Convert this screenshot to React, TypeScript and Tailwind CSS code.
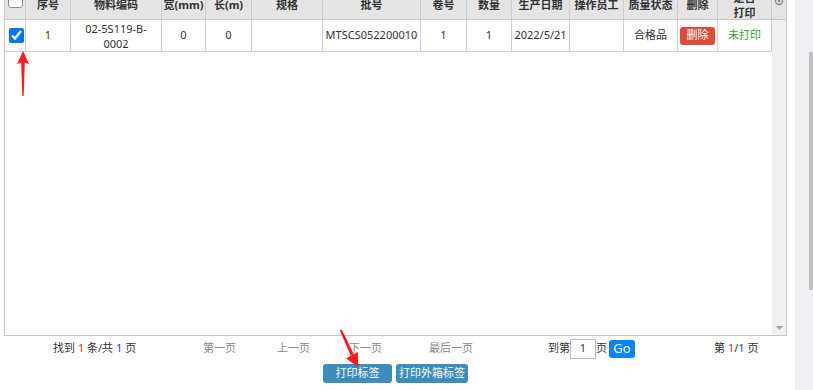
import React from "react";

const headW = [
  "w-[21px]",
  "w-[45px]",
  "w-[91px]",
  "w-[44px]",
  "w-[46px]",
  "w-[71px]",
  "w-[98px]",
  "w-[46px]",
  "w-[45px]",
  "w-[58px]",
  "w-[54px]",
  "w-[54px]",
  "w-[40px]",
  "w-[54px]",
];

const heads = [
  "",
  "序号",
  "物料编码",
  "宽(mm)",
  "长(m)",
  "规格",
  "批号",
  "卷号",
  "数量",
  "生产日期",
  "操作员工",
  "质量状态",
  "删除",
  "是否打印",
];

export default function App() {
  const font = { fontFamily: '"Noto Sans", "Noto Sans CJK SC", sans-serif' };
  return (
    <div
      className="w-[813px] h-[390px] overflow-hidden flex bg-white text-[11px] text-[#333]"
      style={font}
    >
      <div className="w-[795px] h-full relative flex flex-col">
        {/* grid */}
        <div className="ml-[4px] mt-[-11px] w-[783px] h-[347px] border border-[#c9c9c9] flex flex-col">
          {/* header */}
          <div className="flex h-[30px] border-b border-[#c9c9c9] bg-[#e4e4e4] shrink-0">
            {heads.map((h, i) => (
              <div
                key={i}
                className={`${headW[i]} h-full border-r border-[#cdcdcd] flex justify-center font-bold text-[#333] leading-[15px] text-center ${
                  i === 0 ? "items-start" : "items-center"
                }`}
              >
                {i === 0 ? (
                  <span className="mt-[3px] w-[15px] h-[15px] rounded-[3px] border border-[#8f8f8f] bg-white block" />
                ) : i === 13 ? (
                  <span>
                    是否
                    <br />
                    打印
                  </span>
                ) : (
                  h
                )}
              </div>
            ))}
            <div className="w-[14px] h-full flex items-center justify-center">
              <svg width="10" height="10" viewBox="0 0 10 10" className="mt-[-8px]">
                <circle cx="5" cy="5" r="3.5" fill="none" stroke="#8a8a8a" strokeWidth="1.4" />
                <circle cx="5" cy="5" r="1.3" fill="#8a8a8a" />
              </svg>
            </div>
          </div>
          {/* body */}
          <div className="flex flex-1">
            <div className="w-[767px] bg-white">
              <div className="flex h-[32px] border-b border-[#d0d0d0] text-[#333]">
                <div className="w-[21px] border-r border-[#d0d0d0] flex items-center justify-center">
                  <input
                    type="checkbox"
                    defaultChecked
                    readOnly
                    className="w-[15px] h-[15px] m-0 accent-[#0075ff] ml-[3px]"
                  />
                </div>
                <div className="w-[45px] border-r border-[#d0d0d0] flex items-center justify-center">1</div>
                <div className="w-[91px] border-r border-[#d0d0d0] flex items-center justify-center text-center leading-[15px]">
                  <span>
                    02-5S119-B-
                    <br />
                    0002
                  </span>
                </div>
                <div className="w-[44px] border-r border-[#d0d0d0] flex items-center justify-center">0</div>
                <div className="w-[46px] border-r border-[#d0d0d0] flex items-center justify-center">0</div>
                <div className="w-[71px] border-r border-[#d0d0d0]" />
                <div className="w-[98px] border-r border-[#d0d0d0] flex items-center justify-center whitespace-nowrap">
                  MTSCS052200010
                </div>
                <div className="w-[46px] border-r border-[#d0d0d0] flex items-center justify-center">1</div>
                <div className="w-[45px] border-r border-[#d0d0d0] flex items-center justify-center">1</div>
                <div className="w-[58px] border-r border-[#d0d0d0] flex items-center justify-center whitespace-nowrap">
                  2022/5/21
                </div>
                <div className="w-[54px] border-r border-[#d0d0d0]" />
                <div className="w-[54px] border-r border-[#d0d0d0] flex items-center justify-center">合格品</div>
                <div className="w-[40px] border-r border-[#d0d0d0] flex items-center justify-center">
                  <span className="w-[35px] h-[18px] rounded-[3px] bg-[#dd4b39] text-white flex items-center justify-center">
                    删除
                  </span>
                </div>
                <div className="w-[54px] border-r border-[#d0d0d0] flex items-center justify-center text-[#3a9a3a]">
                  未打印
                </div>
              </div>
            </div>
            <div className="w-[14px] bg-[#f0f0f0] flex flex-col justify-end items-center pb-[5px]">
              <svg width="7" height="4" viewBox="0 0 7 4">
                <polygon points="0,0 7,0 3.5,4" fill="#a3a3a3" />
              </svg>
            </div>
          </div>
        </div>

        {/* pagination */}
        <div className="h-[25px] flex items-center pl-[53px] shrink-0 whitespace-nowrap">
          <div className="w-[150px]">
            找到 <span className="text-[#f02020]">1</span> 条/共 <span className="text-[#2040f0]">1</span> 页
          </div>
          <div className="w-[74px] text-[#888]">第一页</div>
          <div className="w-[72px] text-[#888]">上一页</div>
          <div className="w-[80px] text-[#888]">下一页</div>
          <div className="w-[119px] text-[#888]">最后一页</div>
          <div className="w-[166px] flex items-center">
            <span>到第</span>
            <span className="w-[26px] h-[20px] border border-[#bdbdbd] flex items-center justify-center text-[#334]">
              1
            </span>
            <span>页</span>
            <span className="ml-[2px] w-[26px] h-[18px] rounded-[3px] bg-[#0a84ff] text-white text-[13px] flex items-center justify-center">
              Go
            </span>
          </div>
          <div>
            第 <span className="text-[#f02020]">1</span>/<span className="text-[#2040f0]">1</span> 页
          </div>
        </div>

        {/* buttons */}
        <div className="flex pl-[323px] mt-[3px] gap-[4px]">
          <span className="w-[69px] h-[19px] rounded-[3px] bg-[#3c8dbc] text-white flex items-center justify-center">
            打印标签
          </span>
          <span className="w-[72px] h-[19px] rounded-[3px] bg-[#3c8dbc] text-white flex items-center justify-center">
            打印外箱标签
          </span>
        </div>

        {/* red annotation arrows */}
        <svg
          className="absolute left-0 top-0 pointer-events-none"
          width="795"
          height="390"
          viewBox="0 0 795 390"
        >
          <polygon
            points="23,51 29,64 24.8,62.5 23.7,96 22.3,96 21.2,62.5 17,64"
            fill="#ff1a1a"
          />
          <polygon
            points="358,367 357.9,352 353.8,354.2 341.8,329.6 339.8,330.4 350.8,355.8 346.2,358.4"
            fill="#ff1a1a"
          />
        </svg>
      </div>
      <div className="w-[18px] h-full bg-[#eef0f4] pt-[52px] pl-[14px]">
        <div className="w-[4px] h-[238px] bg-[#c1c1c1]" />
      </div>
    </div>
  );
}
